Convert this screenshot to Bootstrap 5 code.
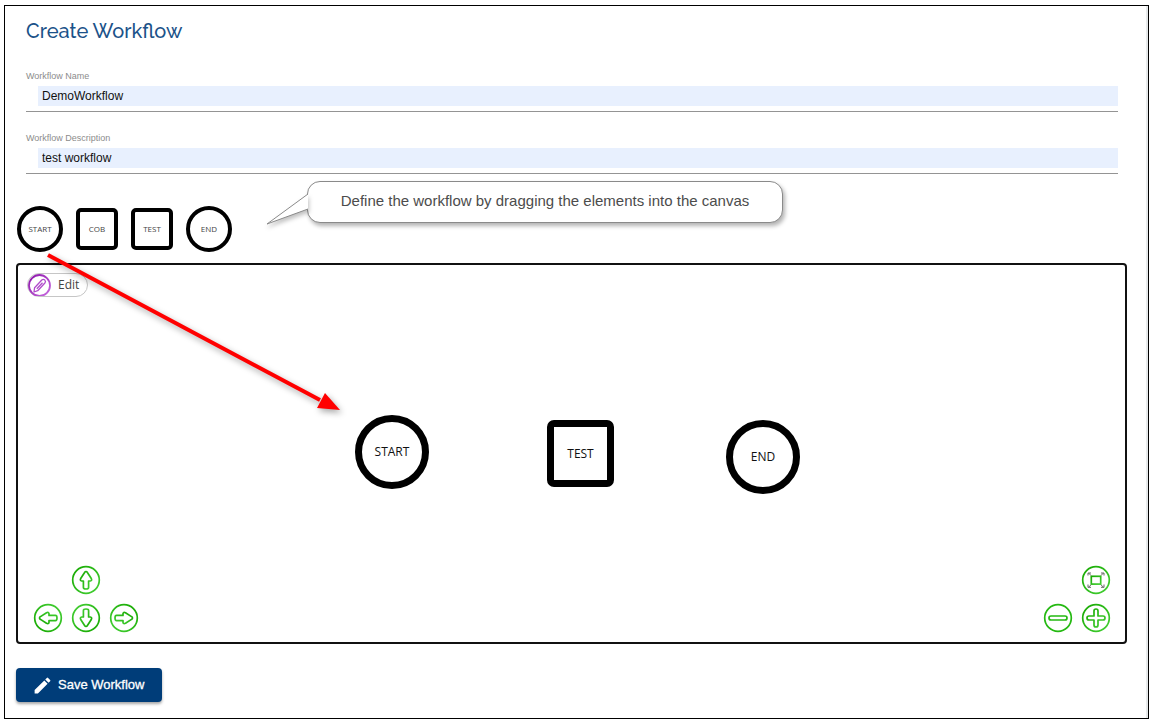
<!DOCTYPE html>
<html lang="en">
<head>
<meta charset="utf-8">
<meta name="viewport" content="width=device-width, initial-scale=1">
<title>Create Workflow</title>
<link href="https://cdn.jsdelivr.net/npm/bootstrap@5.3.0/dist/css/bootstrap.min.css" rel="stylesheet">
<style>
body { font-family: "Liberation Sans", Arial, sans-serif; background: #fff; padding: 5px 7px 4px 4px; }
.page-frame { border: 1px solid #000; padding: 10px 21px 16px 11px; box-shadow: inset -2px 0 0 #e6e9ea; }
.page-title { font: 500 20px/30px Raleway, Lato, sans-serif; color: #1b5289; }
.inset-x { margin: 0 9px 0 10px; }
.wf-fields { margin-top: 24px; display: grid; gap: 20px; }
.wf-field { border-bottom: 1px solid #949494; padding-bottom: 5px; }
.wf-field label { font-size: 9px; line-height: 12px; color: #8c8c8c; margin-bottom: 4px; }
.wf-field input { height: 20px; margin-left: 12px; padding: 0 4px; border: 0; border-radius: 0; background: #e8f0fe; font-size: 12px; line-height: 18px; color: #111; }
.wf-entry { display: flex; }
.designer { margin-top: 32px; }
.palette { gap: 13px; padding-left: 1px; }
.shape { display: flex; align-items: center; justify-content: center; border: 4px solid #000; background: #fff; color: #444; font: 400 8px/10px "Open Sans", sans-serif; padding: 0; flex: none; }
.shape-circle { width: 46px; height: 46px; border-radius: 50%; }
.shape-square { width: 42px; height: 42px; border-radius: 5px; }
.callout { left: 291px; top: -25px; width: 476px; height: 42px; border: 1px solid #8a8a8a; border-radius: 13px; background: #fff; color: #4c4c4c; font-size: 15px; line-height: 38px; text-align: center; box-shadow: 2px 3px 4px rgba(0,0,0,.3); }
.callout-tail { left: 247px; top: -17px; filter: drop-shadow(1px 3px 2px rgba(0,0,0,.25)); }
.drag-arrow { left: 0; top: 0; pointer-events: none; filter: drop-shadow(2px 3px 3px rgba(0,0,0,.35)); }
.wf-canvas { margin-top: 11px; border: 2px solid #111; border-radius: 4px; min-height: 320px; }
.node { border-width: 7px; font-size: 12px; line-height: 16px; color: #111; position: absolute; }
.node.shape-circle { width: 74px; height: 74px; }
.node.shape-square { width: 67px; height: 67px; border-radius: 7px; }
.edit-btn { position: absolute; left: 9px; top: 8px; height: 24px; padding: 0 8px 0 0; border: 1px solid #c6c6c6; border-radius: 12px; background: #fff; color: #444; font: 400 12px/22px "Open Sans", sans-serif; gap: 7px; }
.edit-btn svg { flex: none; }
.nav-pad { display: grid; grid-auto-columns: 28px; grid-auto-rows: 28px; gap: 10px; }
.nav-pad button { padding: 0; border: 0; background: none; line-height: 0; }
.nav-pad svg { overflow: visible; }
.pads { padding: 0 15px 10px 16px; }
.save-btn { margin-top: 24px; height: 34px; padding: 0 16px 0 16px; gap: 5px; background: #003d79; color: #fff; border: 0; border-radius: 4px; font-size: 13px; line-height: 34px; min-width: 146px; box-shadow: 0 2px 3px rgba(0,0,0,.35); -webkit-text-stroke: .3px #fff; }
.save-btn:hover { background: #00315f; color: #fff; }
</style>
</head>
<body class="min-vh-100 d-flex flex-column">
<main class="page-frame flex-grow-1 d-flex flex-column">
  <h1 class="page-title inset-x">Create Workflow</h1>

  <form class="wf-fields inset-x">
    <div class="wf-field">
      <label for="wfName" class="d-block">Workflow Name</label>
      <div class="wf-entry"><input id="wfName" class="flex-grow-1" type="text" value="DemoWorkflow"></div>
    </div>
    <div class="wf-field">
      <label for="wfDesc" class="d-block">Workflow Description</label>
      <div class="wf-entry"><input id="wfDesc" class="flex-grow-1" type="text" value="test workflow"></div>
    </div>
  </form>

  <section class="designer position-relative flex-grow-1 d-flex flex-column">
    <div class="palette d-flex align-items-center position-relative">
      <button type="button" class="shape shape-circle">START</button>
      <button type="button" class="shape shape-square">COB</button>
      <button type="button" class="shape shape-square">TEST</button>
      <button type="button" class="shape shape-circle">END</button>
      <div class="callout position-absolute">Define the workflow by dragging the elements into the canvas</div>
      <svg class="callout-tail position-absolute" width="48" height="38" viewBox="0 0 48 38"><path d="M45 5 4 35 45 20Z" fill="#fff"/><path d="M45 5 4 35 45 20" fill="none" stroke="#8a8a8a"/></svg>
    </div>

    <div class="wf-canvas position-relative flex-grow-1 d-flex flex-column justify-content-end">
      <button type="button" class="edit-btn d-flex align-items-center">
        <svg width="23" height="22" viewBox="0 0 23 22"><defs><linearGradient id="violet" x1="0" y1="0" x2="1" y2="1"><stop offset="0" stop-color="#8a12a8"/><stop offset="1" stop-color="#c86be0"/></linearGradient></defs><circle cx="11.500" cy="11.500" r="10.500" fill="none" stroke="url(#violet)" stroke-width="1.800"/><path d="M6 18 6.600 13.700 13.800 6Q15.300 4.700 16.800 6.100 18.200 7.500 16.900 9L9.700 16.700ZM8.800 14.800 14.500 8.700" fill="none" stroke="#b04bcb" stroke-width="1.300" stroke-linejoin="round"/></svg>
        <span>Edit</span>
      </button>

      <div class="node shape shape-circle" style="left:337px;top:150px">START</div>
      <div class="node shape shape-square" style="left:529px;top:155px">TEST</div>
      <div class="node shape shape-circle" style="left:708px;top:155px">END</div>

      <svg width="0" height="0" class="position-absolute" aria-hidden="true">
        <defs>
          <linearGradient id="green" x1="0" y1="0" x2="1" y2="1"><stop offset="0" stop-color="#16a800"/><stop offset="1" stop-color="#45d035"/></linearGradient>
          <g id="arrowUp" fill="none" stroke="url(#green)" stroke-width="1.700" stroke-linejoin="round"><circle cx="14" cy="14" r="13.300"/><path d="M14 5.500Q14.800 5.500 15.400 6.500L19.300 12.500Q20.300 14.700 18.300 15L16.600 15V21.500Q16.600 23 14 23T11.400 21.500V15L9.700 15Q7.700 14.700 8.700 12.500L12.600 6.500Q13.200 5.500 14 5.500Z"/></g>
        </defs>
      </svg>
      <div class="pads d-flex justify-content-between align-items-end">
        <div class="nav-pad">
          <button type="button" aria-label="Up" style="grid-area:1/2"><svg width="28" height="28"><use href="#arrowUp"/></svg></button>
          <button type="button" aria-label="Left" style="grid-area:2/1"><svg width="28" height="28"><use href="#arrowUp" transform="rotate(-90 14 14)"/></svg></button>
          <button type="button" aria-label="Down" style="grid-area:2/2"><svg width="28" height="28"><use href="#arrowUp" transform="rotate(180 14 14)"/></svg></button>
          <button type="button" aria-label="Right" style="grid-area:2/3"><svg width="28" height="28"><use href="#arrowUp" transform="rotate(90 14 14)"/></svg></button>
        </div>
        <div class="nav-pad">
          <button type="button" aria-label="Fit" style="grid-area:1/2"><svg width="28" height="28" fill="none" stroke="url(#green)" stroke-width="1.700"><circle cx="14" cy="14" r="13.300"/><rect x="9.300" y="10.300" width="9.400" height="7.800"/><path d="M9 9.500 6.500 7M6 9.500V7H9M19 9.500 21.500 7M22 9.500V7H19M9 18.800 6.500 21.300M6 18.500V21.300H9M19 18.800 21.500 21.300M22 18.500V21.300H19" stroke="#666" stroke-width="1"/></svg></button>
          <button type="button" aria-label="Zoom out" style="grid-area:2/1"><svg width="28" height="28" fill="none" stroke="#25b912" stroke-width="1.700"><circle cx="14" cy="14" r="13.300"/><rect x="5" y="12" width="18" height="4" rx="2"/></svg></button>
          <button type="button" aria-label="Zoom in" style="grid-area:2/2"><svg width="28" height="28" fill="none" stroke="url(#green)" stroke-width="1.700" stroke-linejoin="round"><circle cx="14" cy="14" r="13.300"/><path d="M12 12V7Q12 5 14 5T16 7V12H21Q23 12 23 14T21 16H16V21Q16 23 14 23T12 21V16H7Q5 16 5 14T7 12Z"/></svg></button>
        </div>
      </div>
    </div>

    <svg class="drag-arrow position-absolute" width="330" height="210" viewBox="0 0 330 210"><path d="M32 49 304 194" stroke="#f00" stroke-width="4"/><path d="M324 204 301 202 309 187Z" fill="#f00"/></svg>
  </section>

  <button type="button" class="save-btn btn d-flex align-items-center align-self-start">
    <svg width="21" height="21" viewBox="0 0 24 24" fill="#fff"><path d="M3 17.250V21h3.750L17.810 9.940l-3.750-3.750ZM20.710 7.040a1 1 0 0 0 0-1.410l-2.340-2.340a1 1 0 0 0-1.410 0l-1.830 1.830 3.750 3.750Z"/></svg>
    <span>Save Workflow</span>
  </button>
</main>
<script src="https://cdn.jsdelivr.net/npm/bootstrap@5.3.0/dist/js/bootstrap.bundle.min.js"></script>
</body>
</html>
